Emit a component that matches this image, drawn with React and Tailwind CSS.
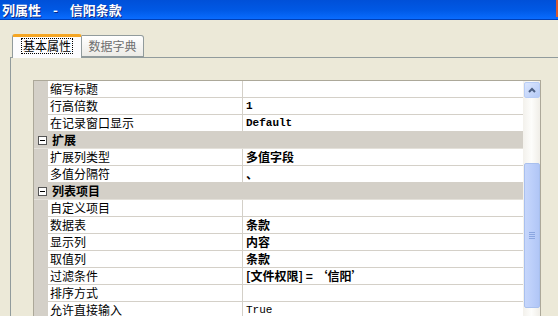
import React from "react";

const CJK = { fontFamily: '"Noto Sans CJK SC", "Noto Sans", sans-serif' };

const rows = [
  { type: "row", label: "缩写标题", value: "" },
  { type: "row", label: "行高倍数", value: "1", mono: true, bold: true },
  { type: "row", label: "在记录窗口显示", value: "Default", mono: true, bold: true },
  { type: "cat", label: "扩展" },
  { type: "row", label: "扩展列类型", value: "多值字段", bold: true },
  { type: "row", label: "多值分隔符", value: "、", bold: true },
  { type: "cat", label: "列表项目" },
  { type: "row", label: "自定义项目", value: "" },
  { type: "row", label: "数据表", value: "条款", bold: true },
  { type: "row", label: "显示列", value: "内容", bold: true },
  { type: "row", label: "取值列", value: "条款", bold: true },
  { type: "row", label: "过滤条件", value: "[文件权限] = ‘信阳’", bold: true },
  { type: "row", label: "排序方式", value: "" },
  { type: "row", label: "允许直接输入", value: "True", mono: true },
];

function Row({ r }) {
  if (r.type === "cat") {
    return (
      <div className="flex h-[17px] bg-[#d4d0c8] items-center border-b border-[#e4e1da]">
        <div className="w-[15px] flex items-center justify-center pl-[2px]">
          <div className="w-[9px] h-[9px] border border-[#555] bg-white flex items-center justify-center">
            <div className="w-[5px] h-px bg-black" />
          </div>
        </div>
        <div className="pl-[3px] text-[12px] font-bold text-black leading-none">{r.label}</div>
      </div>
    );
  }
  return (
    <div className="flex h-[17px]">
      <div className="w-[14px] bg-[#d4d0c8]" />
      <div className="w-[195px] bg-white border-b border-r border-[#d4d0c8] flex items-center pl-[2px] text-[12px] text-black leading-none">
        {r.label}
      </div>
      <div
        className={`flex-1 bg-white border-b border-[#d4d0c8] flex items-center pl-[3px] text-black leading-none whitespace-pre ${r.bold ? "font-bold" : ""} ${r.mono ? "text-[11px]" : "text-[12px]"}`}
        style={r.mono ? { fontFamily: '"Liberation Mono", monospace' } : undefined}
      >
        {r.value}
      </div>
    </div>
  );
}

export default function App() {
  return (
    <div className="w-[558px] h-[316px] bg-[#ECE9D8] overflow-hidden relative" style={CJK}>
      {/* title bar */}
      <div className="h-[20px] bg-gradient-to-b from-[#0050d8] via-[#0058e4] to-[#0a6cff] border-b border-[#0040b8] flex items-center pl-[2px] relative">
        <div className="flex items-center text-white font-bold text-[13px] leading-none [text-shadow:1px_1px_0_#0b2a8a]">
          <span>列属性</span>
          <span className="mx-[12px]">-</span>
          <span>信阳条款</span>
        </div>
        <div className="absolute right-0 top-0 w-[2px] h-[17px] bg-[#d85a30]" />
      </div>

      {/* tabs */}
      <div className="flex items-end pl-[12px] h-[38px] relative z-10">
        <div className="w-[70px] h-[24px] bg-[#fcfcfe] border-x border-[#919b9c] border-t-[3px] border-t-[#f5a623] rounded-t-[3px] flex items-start justify-center pt-[1px]">
          <div className="border border-dotted border-black px-[1px] h-[16px] flex items-center text-[12px] text-black leading-none">
            基本属性
          </div>
        </div>
        <div className="w-[62px] h-[22px] mb-px bg-gradient-to-b from-white to-[#ecebe6] border border-[#919b9c] border-l-0 rounded-tr-[3px] flex items-center justify-center text-[12px] text-[#6f6f6f] leading-none">
          数据字典
        </div>
      </div>

      {/* panel */}
      <div className="ml-[10px] -mt-px border-l border-t border-[#919b9c] h-[300px] pl-[22px] pt-[22px]">
        <div className="w-[508px] border-l border-t border-r border-[#aca899] flex">
          <div className="w-[489px] flex flex-col">
            {rows.map((r, i) => (
              <Row key={i} r={r} />
            ))}
          </div>
          {/* scrollbar */}
          <div className="w-[17px] bg-gradient-to-r from-[#f3f1ec] via-[#fdfdfb] to-[#f0eee8] flex flex-col items-center">
            <div className="w-[16px] h-[16px] mt-px rounded-[2px] border border-[#b8cdf6] bg-gradient-to-br from-[#dbe6fd] to-[#b6cbf7] flex items-center justify-center">
              <svg width="8" height="6" viewBox="0 0 8 6">
                <path d="M1 5 L4 2 L7 5" stroke="#4d6185" strokeWidth="2" fill="none" />
              </svg>
            </div>
            <div className="w-[16px] h-[145px] mt-[65px] rounded-[2px] border border-[#a9c0ee] bg-gradient-to-r from-[#c6d6fb] via-[#bccffa] to-[#b1c6f6] flex flex-col items-center justify-center gap-[1px]">
              <div className="w-[6px] h-px bg-[#8ba6e0]" />
              <div className="w-[6px] h-px bg-[#8ba6e0]" />
              <div className="w-[6px] h-px bg-[#8ba6e0]" />
              <div className="w-[6px] h-px bg-[#8ba6e0]" />
            </div>
          </div>
        </div>
      </div>
    </div>
  );
}
